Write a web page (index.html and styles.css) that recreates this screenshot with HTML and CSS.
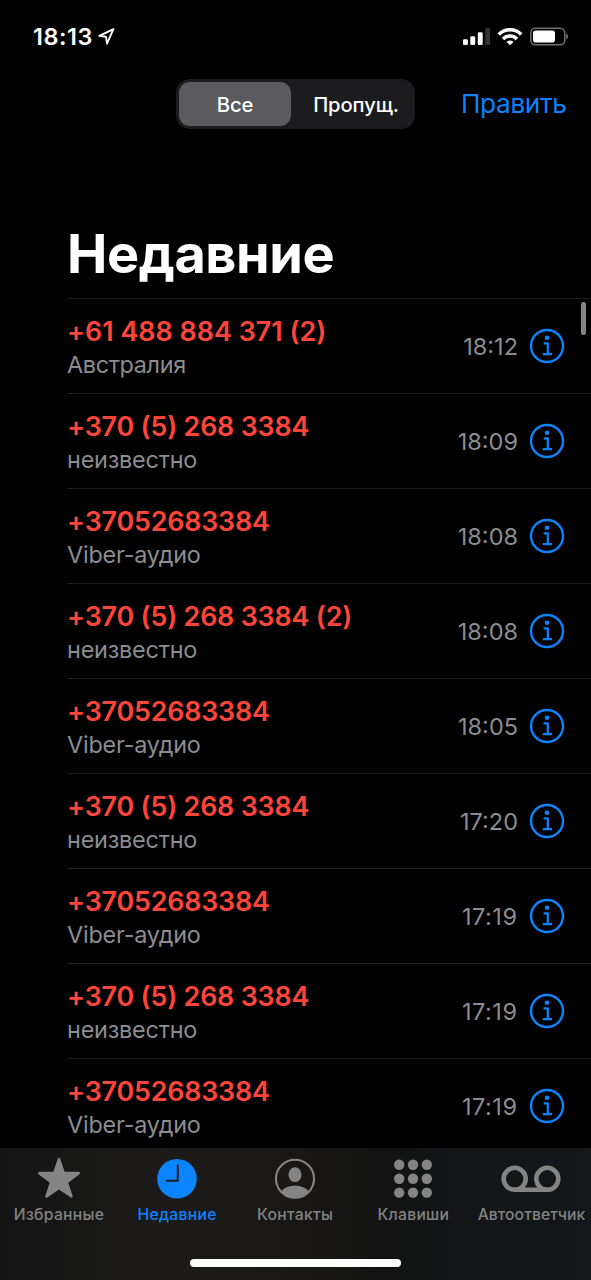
FILE: index.html
```html
<!DOCTYPE html>
<html lang="ru">
<head>
<meta charset="utf-8">
<title>Недавние</title>
<link rel="stylesheet" href="styles.css">
</head>
<body>
<div class="phone">
  <header class="status">
    <span class="clock">18:13</span>
    <svg class="location" width="17" height="17" viewBox="0 0 17 17"><path d="M1.3 7.8 15.4 1.2 9 15.6 8 8.7Z"/></svg>
    <svg class="signals" width="108" height="20" viewBox="0 0 108 20">
      <g fill="#fff"><rect x="1" y="12.2" width="4.9" height="5.8" rx="1.3"/><rect x="8.3" y="9.2" width="4.9" height="8.8" rx="1.3"/><rect x="15.8" y="5.2" width="4.9" height="12.8" rx="1.3"/></g>
      <rect x="23.2" y="1" width="4.9" height="17" rx="1.3" fill="#343436"/>
      <g fill="none" stroke="#fff" stroke-width="3.6"><path d="M36.8 7.4a15.8 15.8 0 0 1 22.4 0"/><path d="M41 11.9a9.9 9.9 0 0 1 14 0"/></g>
      <path d="M48 18.3l-3.5-3.4a5 5 0 0 1 7 0z" fill="#fff"/>
      <rect x="68.8" y="1.2" width="34" height="16.6" rx="4.8" fill="none" stroke="#707072" stroke-width="1.5"/>
      <rect x="71" y="3.4" width="22" height="12.2" rx="2.8" fill="#fff"/>
      <path d="M104.2 6.5c2.5 1.1 2.5 4.9 0 6z" fill="#707072"/>
    </svg>
  </header>

  <nav class="topbar">
    <div class="segments">
      <span class="segment selected">Все</span>
      <span class="segment missed">Пропущ.</span>
    </div>
    <a class="edit">Править</a>
  </nav>

  <h1 class="title">Недавние</h1>

  <main class="calls">
    <div class="call"><div class="who"><div class="number mobile">+61 488 884 371 (2)</div><div class="place country">Австралия</div></div><span class="time">18:12</span><svg class="info"><use href="#info"/></svg></div>
    <div class="call"><div class="who"><div class="number">+370 (5) 268 3384</div><div class="place">неизвестно</div></div><span class="time">18:09</span><svg class="info"><use href="#info"/></svg></div>
    <div class="call"><div class="who"><div class="number">+37052683384</div><div class="place">Viber-аудио</div></div><span class="time">18:08</span><svg class="info"><use href="#info"/></svg></div>
    <div class="call"><div class="who"><div class="number">+370 (5) 268 3384 (2)</div><div class="place">неизвестно</div></div><span class="time">18:08</span><svg class="info"><use href="#info"/></svg></div>
    <div class="call"><div class="who"><div class="number">+37052683384</div><div class="place">Viber-аудио</div></div><span class="time">18:05</span><svg class="info"><use href="#info"/></svg></div>
    <div class="call"><div class="who"><div class="number">+370 (5) 268 3384</div><div class="place">неизвестно</div></div><span class="time">17:20</span><svg class="info"><use href="#info"/></svg></div>
    <div class="call"><div class="who"><div class="number">+37052683384</div><div class="place">Viber-аудио</div></div><span class="time wide">17:19</span><svg class="info"><use href="#info"/></svg></div>
    <div class="call"><div class="who"><div class="number">+370 (5) 268 3384</div><div class="place">неизвестно</div></div><span class="time wide">17:19</span><svg class="info"><use href="#info"/></svg></div>
    <div class="call"><div class="who"><div class="number">+37052683384</div><div class="place">Viber-аудио</div></div><span class="time wide">17:19</span><svg class="info"><use href="#info"/></svg></div>
    <div class="scrollbar"></div>
  </main>

  <footer class="tabbar">
    <div class="tabs">
      <div class="tab favorites">
        <svg width="60" height="44" viewBox="0 0 60 44"><path d="M30 3.2 34.7 16.9 49.7 17.1 37.8 26.2 42.4 40.5 30 32 17.6 40.5 22.2 26.2 10.3 17.1 25.3 16.9Z" fill="#848484" stroke="#848484" stroke-width="2.6" stroke-linejoin="round"/></svg>
        <span>Избранные</span>
      </div>
      <div class="tab recents">
        <svg width="60" height="44" viewBox="0 0 60 44"><circle cx="30" cy="22.8" r="19.8" fill="#0a84ff"/><path d="M30.8 9.2V24.7H19.8" fill="none" stroke="#1b1b1b" stroke-width="2" stroke-linecap="round" stroke-linejoin="round"/></svg>
        <span>Недавние</span>
      </div>
      <div class="tab contacts">
        <svg width="60" height="44" viewBox="0 0 60 44"><defs><clipPath id="face"><circle cx="30" cy="22.8" r="18.5"/></clipPath></defs><circle cx="30" cy="22.8" r="19" fill="none" stroke="#848484" stroke-width="2.1"/><g fill="#848484" clip-path="url(#face)"><ellipse cx="30" cy="18.7" rx="6.5" ry="7.4"/><ellipse cx="30" cy="38" rx="14" ry="8.6"/></g></svg>
        <span>Контакты</span>
      </div>
      <div class="tab keypad">
        <svg width="60" height="44" viewBox="0 0 60 44" fill="#848484"><circle cx="16.2" cy="8.8" r="5.2"/><circle cx="30" cy="8.8" r="5.2"/><circle cx="43.8" cy="8.8" r="5.2"/><circle cx="16.2" cy="22.7" r="5.2"/><circle cx="30" cy="22.7" r="5.2"/><circle cx="43.8" cy="22.7" r="5.2"/><circle cx="16.2" cy="36.6" r="5.2"/><circle cx="30" cy="36.6" r="5.2"/><circle cx="43.8" cy="36.6" r="5.2"/></svg>
        <span>Клавиши</span>
      </div>
      <div class="tab voicemail">
        <svg width="60" height="44" viewBox="0 0 60 44" fill="none" stroke="#848484" stroke-width="4.6"><circle cx="13.7" cy="22.8" r="11"/><circle cx="46.3" cy="22.8" r="11"/><path d="M13.7 33.8H46.3"/></svg>
        <span>Автоответчик</span>
      </div>
    </div>
    <div class="home"></div>
  </footer>
</div>
<svg class="symbols" width="0" height="0">
  <symbol id="info" viewBox="0 0 36 36">
    <circle cx="18" cy="18" r="16" fill="none" stroke="#0a84ff" stroke-width="2.4"/>
    <circle cx="18" cy="9.7" r="2.3" fill="#0a84ff"/>
    <path d="M14.6 15.3H18.8V26M13.8 26.1H23" fill="none" stroke="#0a84ff" stroke-width="2.2" stroke-linejoin="round"/>
  </symbol>
</svg>
</body>
</html>
```

FILE: styles.css
```css
* { box-sizing: border-box; }
body { margin: 0; background: #000; color: #fff; font-family: Inter, "Liberation Sans", sans-serif; }
.phone { width: 591px; height: 1280px; display: flex; flex-direction: column; overflow: hidden; background: #000; }
.symbols { display: block; }

.status { height: 79px; display: flex; align-items: flex-start; padding: 22px 21px 0 33px; }
.clock { width: 65px; font-size: 23.4px; line-height: 29px; font-weight: 600; letter-spacing: 0.6px; white-space: nowrap; }
.location { margin-top: 6px; fill: none; stroke: #fff; stroke-width: 1.9; stroke-linejoin: round; }
.signals { margin: 5px 0 0 auto; }

.topbar { height: 50px; display: flex; align-items: center; padding-left: 176px; }
.segments { width: 239px; height: 50px; padding: 3px; display: flex; border-radius: 14px; background: #1c1c1e; }
.segment { flex: 1; height: 44px; text-align: center; font-size: 20.2px; line-height: 46px; font-weight: 500; letter-spacing: -0.1px; white-space: nowrap; }
.selected { flex: 0 0 112px; border-radius: 11px; background: #5b5a5f; }
.missed { padding-left: 9px; }
.edit { margin-left: 46px; font-size: 26.2px; line-height: 50px; letter-spacing: -0.35px; color: #0a84ff; white-space: nowrap; }

.title { margin: 0; height: 169px; padding: 92px 0 0 67px; font-size: 54px; line-height: 66px; font-weight: 700; letter-spacing: -0.4px; }

.calls { position: relative; flex: 1; min-height: 0; overflow: hidden; }
.call { height: 95.04px; margin-left: 67px; padding: 16px 26px 0 0; display: flex; border-top: 1px solid #1f1f20; }
.who { flex: 1; white-space: nowrap; }
.number { font-size: 26.8px; line-height: 32px; font-weight: 600; letter-spacing: -0.15px; color: #ff453a; }
.mobile { letter-spacing: 0.05px; }
.place { margin-top: 1.5px; font-size: 23.4px; line-height: 32px; letter-spacing: -0.2px; color: #8c8c91; }
.country { letter-spacing: -0.35px; }
.time { margin-top: 17px; font-size: 23.5px; line-height: 30px; color: #8c8c91; }
.wide { letter-spacing: 0.5px; }
.info { width: 36px; height: 36px; margin: 13px 0 0 11px; }
.wide + .info { margin-left: 11.5px; }
.scrollbar { position: absolute; top: 4px; right: 5px; width: 5px; height: 33px; border-radius: 3px; background: #858585; }

.tabbar { height: 132px; background: linear-gradient(90deg, #141414, #1c1b1a 28%, #191816 48%, #131313 65%, #14181b); }
.tabs { height: 111px; padding-top: 8px; display: grid; grid-template-columns: repeat(5, 118.1px); }
.tab { display: flex; flex-direction: column; align-items: center; font-size: 15.7px; line-height: 20px; font-weight: 500; letter-spacing: 0.3px; color: #828282; white-space: nowrap; }
.tab svg { margin: 0 1px 5px 0; }
.recents { color: #0a84ff; }
.voicemail { letter-spacing: 0.05px; }
.home { width: 211px; height: 8px; margin: 0 auto; border-radius: 4px; background: #fff; }
```
